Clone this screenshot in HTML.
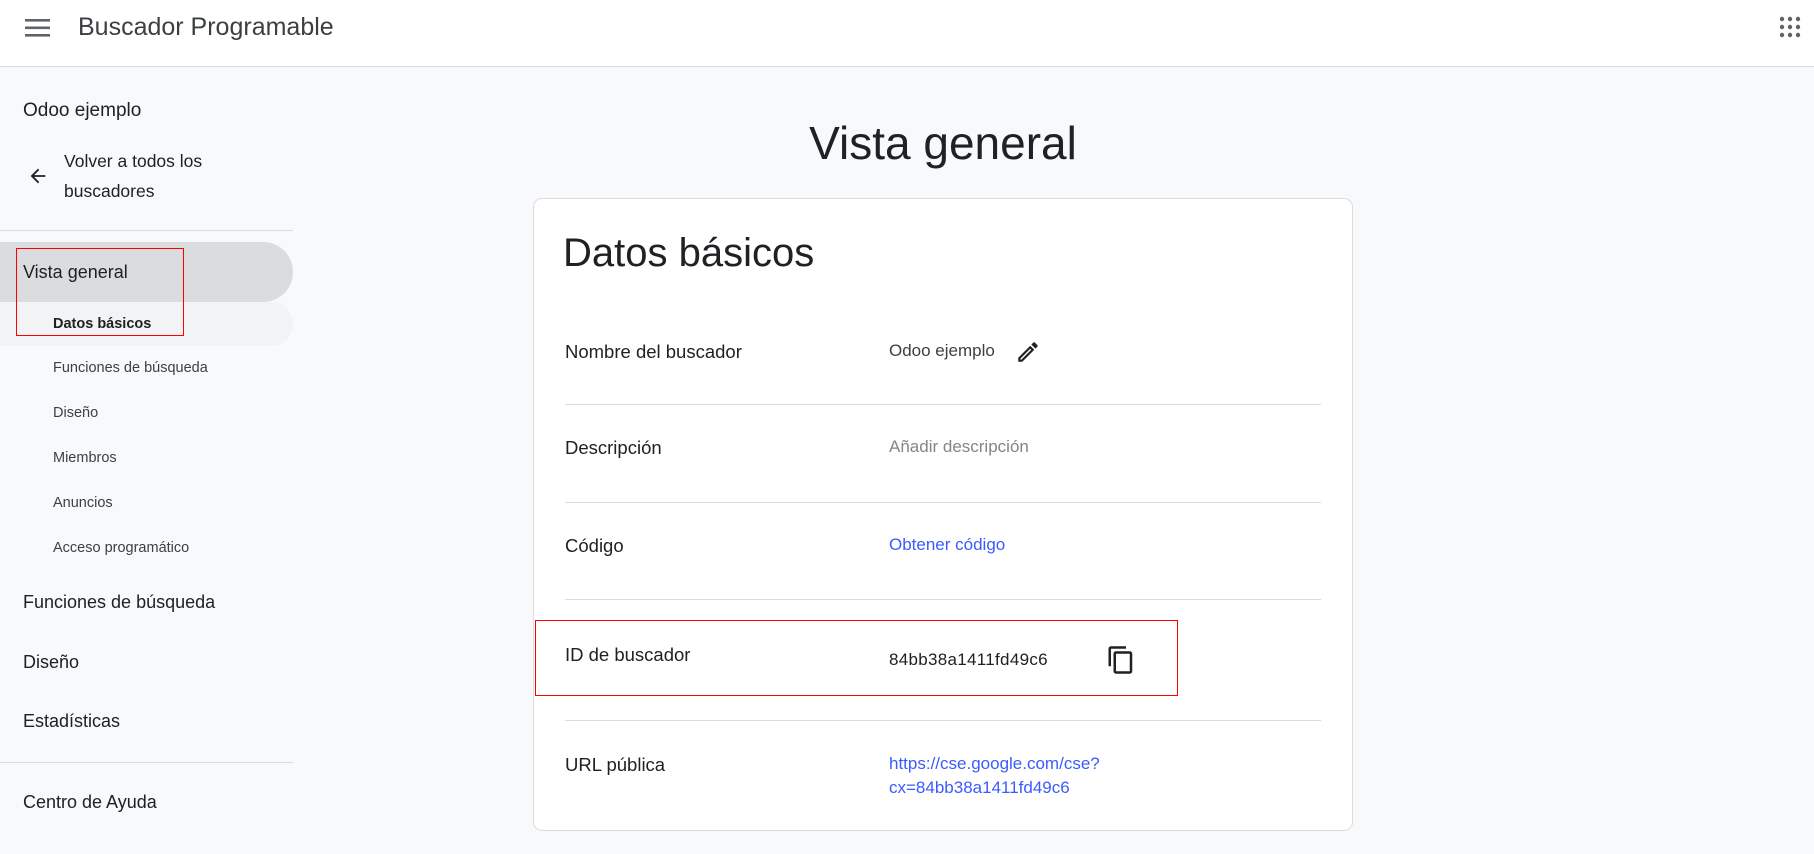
<!DOCTYPE html>
<html><head><meta charset="utf-8"><style>
*{margin:0;padding:0;box-sizing:border-box}
body{width:1814px;height:854px;overflow:hidden;background:#f8f9fa;font-family:"Liberation Sans",Arial,sans-serif;color:#202124;position:relative}
.a{position:absolute;white-space:nowrap}
.t{height:30px;line-height:30px;margin-top:-15px}
.hdr{position:absolute;left:0;top:0;width:1814px;height:67px;background:#fff;border-bottom:1px solid #dadce0}
.hr{position:absolute;height:1px;background:#dadce0}
.nav{font-size:18px;color:#202124;left:23px}
.sub{font-size:14.5px;color:#3c4043;left:53px}
.lbl{font-size:18.5px;left:565px;color:#202124}
.val{font-size:17px;left:889px;color:#3c4043}
.link{color:#3b5bfd}
.red{position:absolute;border:1.5px solid #f00}
</style></head><body>
<div class="hdr"></div>
<svg class="a" style="left:25px;top:18px" width="26" height="20" viewBox="0 0 26 20"><rect x="0" y="1" width="25" height="2.6" fill="#5f6368"/><rect x="0" y="8.5" width="25" height="2.6" fill="#5f6368"/><rect x="0" y="16" width="25" height="2.6" fill="#5f6368"/></svg>
<div class="a t" style="left:78px;top:27px;font-size:25px;color:#3c4043">Buscador Programable</div>
<svg class="a" style="left:1778px;top:15px" width="24" height="24" viewBox="0 0 24 24" fill="#5f6368"><circle cx="4" cy="4" r="2.2"/><circle cx="12" cy="4" r="2.2"/><circle cx="20" cy="4" r="2.2"/><circle cx="4" cy="12" r="2.2"/><circle cx="12" cy="12" r="2.2"/><circle cx="20" cy="12" r="2.2"/><circle cx="4" cy="20" r="2.2"/><circle cx="12" cy="20" r="2.2"/><circle cx="20" cy="20" r="2.2"/></svg>

<div class="a t nav" style="top:111px;font-size:19px">Odoo ejemplo</div>
<svg class="a" style="left:27px;top:165px" width="22" height="22" viewBox="0 0 24 24"><path d="M20 11H7.8l5.6-5.6L12 4l-8 8 8 8 1.4-1.4L7.8 13H20z" fill="#202124"/></svg>
<div class="a t" style="left:64px;top:161px;font-size:17.5px">Volver a todos los</div>
<div class="a t" style="left:64px;top:191px;font-size:17.5px">buscadores</div>
<div class="hr" style="left:0;top:230px;width:293px"></div>
<div class="a" style="left:0;top:242px;width:293px;height:60px;background:#dadce0;border-radius:0 30px 30px 0"></div>
<div class="a" style="left:0;top:302px;width:293px;height:44px;background:#f1f3f4;border-radius:0 22px 22px 0"></div>
<div class="a t nav" style="top:272px">Vista general</div>
<div class="a t sub" style="top:324px;font-weight:bold;color:#202124">Datos básicos</div>
<div class="a t sub" style="top:368px">Funciones de búsqueda</div>
<div class="a t sub" style="top:413px">Diseño</div>
<div class="a t sub" style="top:458px">Miembros</div>
<div class="a t sub" style="top:503px">Anuncios</div>
<div class="a t sub" style="top:548px">Acceso programático</div>
<div class="a t nav" style="top:602px">Funciones de búsqueda</div>
<div class="a t nav" style="top:662px">Diseño</div>
<div class="a t nav" style="top:721px">Estadísticas</div>
<div class="hr" style="left:0;top:762px;width:293px"></div>
<div class="a t nav" style="top:802px">Centro de Ayuda</div>
<div class="red" style="left:16px;top:248px;width:168px;height:88px"></div>

<div class="a" style="left:543px;width:800px;text-align:center;top:115px;height:56px;line-height:56px;font-size:46px;color:#202124">Vista general</div>
<div class="a" style="left:533px;top:198px;width:820px;height:633px;background:#fff;border:1px solid #dadce0;border-radius:9px"></div>
<div class="a" style="left:563px;top:228px;height:50px;line-height:50px;font-size:40px">Datos básicos</div>

<div class="a t lbl" style="top:352px">Nombre del buscador</div>
<div class="a t val" style="top:351px">Odoo ejemplo</div>
<svg class="a" style="left:1015px;top:339px" width="26" height="26" viewBox="0 0 24 24"><path d="M3 17.25V21h3.75L17.8 9.94l-3.75-3.75L3 17.25zM5.92 19H5v-.92l9.06-9.06.92.92L5.92 19zM20.7 5.63l-2.34-2.34a1 1 0 0 0-1.41 0l-1.83 1.83 3.75 3.75 1.83-1.83a1 1 0 0 0 0-1.41z" fill="#202124"/></svg>
<div class="hr" style="left:565px;top:404px;width:756px"></div>
<div class="a t lbl" style="top:448px">Descripción</div>
<div class="a t val" style="top:447px;color:#80868b">Añadir descripción</div>
<div class="hr" style="left:565px;top:502px;width:756px"></div>
<div class="a t lbl" style="top:546px">Código</div>
<div class="a t val link" style="top:545px">Obtener código</div>
<div class="hr" style="left:565px;top:599px;width:756px"></div>
<div class="a t lbl" style="top:655px">ID de buscador</div>
<div class="a t val" style="top:660px;color:#202124;letter-spacing:0.3px">84bb38a1411fd49c6</div>
<svg class="a" style="left:1106px;top:645px" width="30" height="30" viewBox="0 0 24 24"><path d="M16 1H4a2 2 0 0 0-2 2v14h2V3h12V1zm3 4H8a2 2 0 0 0-2 2v14a2 2 0 0 0 2 2h11a2 2 0 0 0 2-2V7a2 2 0 0 0-2-2zm0 16H8V7h11v14z" fill="#202124"/></svg>
<div class="red" style="left:535px;top:620px;width:643px;height:76px"></div>
<div class="hr" style="left:565px;top:720px;width:756px"></div>
<div class="a t lbl" style="top:765px">URL pública</div>
<div class="a t val link" style="top:764px">https://cse.google.com/cse?</div>
<div class="a t val link" style="top:788px">cx=84bb38a1411fd49c6</div>
</body></html>
